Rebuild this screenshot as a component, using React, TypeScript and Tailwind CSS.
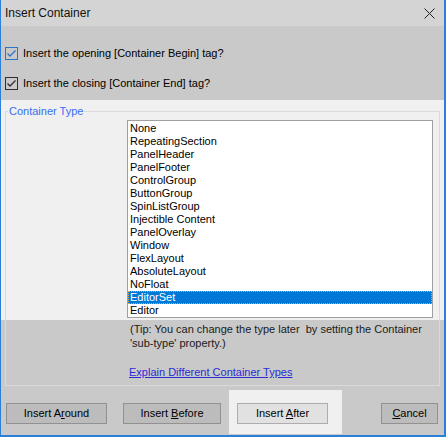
const items = [
  "None",
  "RepeatingSection",
  "PanelHeader",
  "PanelFooter",
  "ControlGroup",
  "ButtonGroup",
  "SpinListGroup",
  "Injectible Content",
  "PanelOverlay",
  "Window",
  "FlexLayout",
  "AbsoluteLayout",
  "NoFloat",
  "EditorSet",
  "Editor",
];

function Check({ focused }: { focused?: boolean }) {
  const c = focused ? "#2f73c4" : "#2e2e2e";
  return (
    <div
      className={`w-[13px] h-[13px] border flex items-center justify-center bg-[#c9c9c9] ${
        focused ? "border-[#2f73c4]" : "border-[#2e2e2e]"
      }`}
    >
      <svg width="11" height="11" viewBox="0 0 11 11">
        <polyline points="1.5,5.5 4,8 9.5,2.5" fill="none" stroke={c} strokeWidth="1.3" />
      </svg>
    </div>
  );
}

function Btn({ children, w, hot }: { children: React.ReactNode; w: string; hot?: boolean }) {
  return (
    <div
      className={`${w} h-[21px] border flex items-center justify-center text-black ${
        hot ? "bg-[#e1e1e1] border-[#adadad]" : "bg-[#bcbcbc] border-[#919191]"
      }`}
    >
      {children}
    </div>
  );
}

export default function App() {
  return (
    <div className="w-[446px] h-[437px] flex flex-col bg-[#c9c9c9] border-l border-r-2 border-b-2 border-[#2b7fd8] font-['Liberation_Sans',Arial,sans-serif] text-[11px] text-black overflow-hidden">
      {/* title bar */}
      <div className="h-[26px] bg-[#d4d4d4] flex items-center justify-between pl-[4px] pr-[9px]">
        <span className="text-[12px] text-[#111]">Insert Container</span>
        <svg width="11" height="11" viewBox="0 0 11 11">
          <path d="M0.5 0.5 L10.5 10.5 M10.5 0.5 L0.5 10.5" stroke="#222" strokeWidth="1" />
        </svg>
      </div>

      {/* checkboxes */}
      <div className="h-[74px] flex flex-col gap-[14px] pt-[19px] pl-[4px]">
        <div className="flex items-center gap-[5px] h-[16px]">
          <Check focused />
          <span>Insert the opening [Container Begin] tag?</span>
        </div>
        <div className="flex items-center gap-[5px] h-[16px]">
          <Check />
          <span>Insert the closing [Container End] tag?</span>
        </div>
      </div>

      {/* container type group */}
      <div className="bg-[linear-gradient(to_bottom,#f0f0f0_220px,#c9c9c9_220px)] pt-[4px] px-[4px]">
        <fieldset className="border border-[#dadada] pb-[6px]">
          <legend className="ml-[2px] px-[1px] leading-[15px] text-[#3a6cf4]">Container Type</legend>
          <div className="ml-[121px] mt-[1px] w-[306px] h-[198px] pt-[1px] bg-white border border-[#a0a0a0] flex flex-col">
            {items.map((it) =>
              it === "EditorSet" ? (
                <div
                  key={it}
                  className="h-[13px] leading-[13px] bg-[#0078d7] text-white pl-[2px] outline-1 outline-dotted outline-[#f3a33a] -outline-offset-1"
                >
                  {it}
                </div>
              ) : (
                <div key={it} className="h-[13px] leading-[13px] pl-[2px]">
                  {it}
                </div>
              )
            )}
          </div>
          <div className="ml-[124px] mt-[4px] leading-[14px] text-[#1a1a1a]">
            <div className="whitespace-pre">(Tip: You can change the type later  by setting the Container</div>
            <div>'sub-type' property.)</div>
          </div>
          <div className="ml-[123px] mt-[15px] leading-[14px]">
            <span className="underline text-[#2b2bd6]">Explain Different Container Types</span>
          </div>
        </fieldset>
      </div>

      {/* buttons */}
      <div className="flex items-start pt-[4px] pl-[5px]">
        <div className="pt-[13px]">
          <Btn w="w-[101px]">
            <span>
              Insert A<u>r</u>ound
            </span>
          </Btn>
        </div>
        <div className="pt-[13px] ml-[16px]">
          <Btn w="w-[98px]">
            <span>
              Insert <u>B</u>efore
            </span>
          </Btn>
        </div>
        <div className="ml-[8px] bg-[#f0f0f0] pt-[13px] pb-[10px] pl-[8px] pr-[14px]">
          <Btn w="w-[91px]" hot>
            <span>
              Insert <u>A</u>fter
            </span>
          </Btn>
        </div>
        <div className="pt-[13px] ml-[39px]">
          <Btn w="w-[57px]">
            <span>
              <u>C</u>ancel
            </span>
          </Btn>
        </div>
      </div>
    </div>
  );
}
